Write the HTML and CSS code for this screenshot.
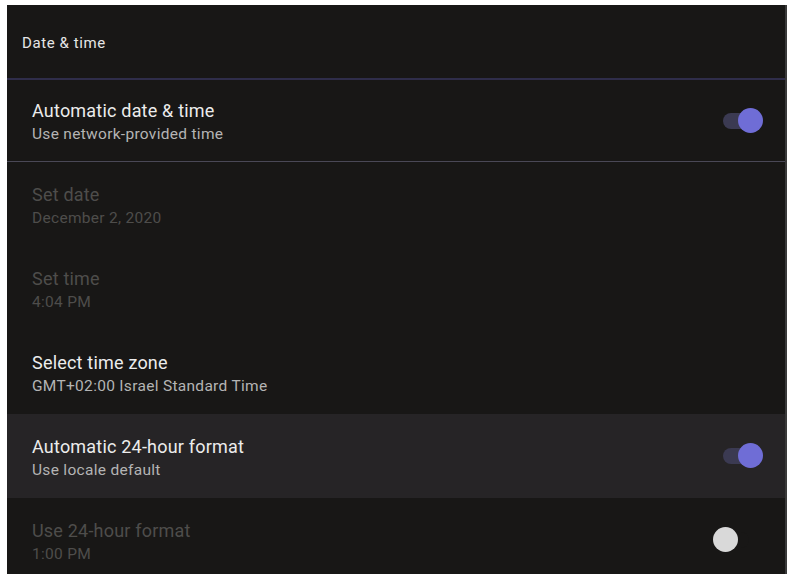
FILE: index.html
```html
<!DOCTYPE html>
<html>
<head>
<meta charset="utf-8">
<link rel="stylesheet" href="styles.css">
</head>
<body>
<div class="screen">
  <div class="header">Date &amp; time</div>
  <div class="row row-first">
    <div class="texts">
      <div class="title">Automatic date &amp; time</div>
      <div class="sub">Use network-provided time</div>
    </div>
    <div class="switch on"><span class="track"></span><span class="thumb"></span></div>
  </div>
  <div class="row disabled">
    <div class="texts">
      <div class="title">Set date</div>
      <div class="sub">December 2, 2020</div>
    </div>
  </div>
  <div class="row disabled">
    <div class="texts">
      <div class="title">Set time</div>
      <div class="sub">4:04 PM</div>
    </div>
  </div>
  <div class="row">
    <div class="texts">
      <div class="title">Select time zone</div>
      <div class="sub">GMT+02:00 Israel Standard Time</div>
    </div>
  </div>
  <div class="row focused">
    <div class="texts">
      <div class="title">Automatic 24-hour format</div>
      <div class="sub">Use locale default</div>
    </div>
    <div class="switch on"><span class="track"></span><span class="thumb"></span></div>
  </div>
  <div class="row disabled">
    <div class="texts">
      <div class="title">Use 24-hour format</div>
      <div class="sub">1:00 PM</div>
    </div>
    <div class="switch off"><span class="track"></span><span class="thumb"></span></div>
  </div>
</div>
</body>
</html>
```
FILE: styles.css
```css
html, body {
  margin: 0;
  padding: 0;
  background: #ffffff;
  height: 100%;
  overflow: hidden;
}
.screen {
  margin: 5px 3px 0 7px;
  height: 569px;
  background: #181716;
  font-family: Roboto, "Liberation Sans", sans-serif;
  overflow: hidden;
  border-right: 2px solid #3a3a3a;
}
.header {
  height: 75px;
  box-sizing: border-box;
  padding: 29px 0 0 15px;
  font-size: 15px;
  letter-spacing: 0.6px;
  color: #e6e6e6;
  border-bottom: 2px solid #2f2d4a;
}
.row {
  height: 84px;
  box-sizing: border-box;
  display: flex;
  align-items: center;
  justify-content: space-between;
  padding: 0 22px 0 25px;
}
.row-first {
  height: 82px;
  border-bottom: 1px solid #4a4856;
}
.texts {
  display: flex;
  flex-direction: column;
  gap: 1px;
  margin-top: 4px;
}
.title {
  font-size: 18px;
  letter-spacing: 0.2px;
  color: #ececec;
  line-height: 22px;
}
.sub {
  font-size: 15.5px;
  letter-spacing: 0.3px;
  color: #b4b4b4;
  line-height: 22px;
}
.disabled .title,
.disabled .sub {
  color: #4e4d4b;
}
.focused {
  background: #262426;
}
.switch {
  position: relative;
  width: 40px;
  height: 26px;
}
.switch .track {
  position: absolute;
  left: 0;
  top: 5px;
  width: 36px;
  height: 16px;
  border-radius: 8px;
}
.switch .thumb {
  position: absolute;
  top: 0;
  width: 25px;
  height: 25px;
  border-radius: 50%;
}
.switch.on .track {
  background: #3b3a52;
}
.switch.on .thumb {
  right: 0;
  background: #6f6dd6;
}
.switch.off {
  margin-right: 10px;
}
.switch.off .track {
  background: #181716;
}
.switch.off .thumb {
  left: 0;
  background: #d9d9d9;
}
```
